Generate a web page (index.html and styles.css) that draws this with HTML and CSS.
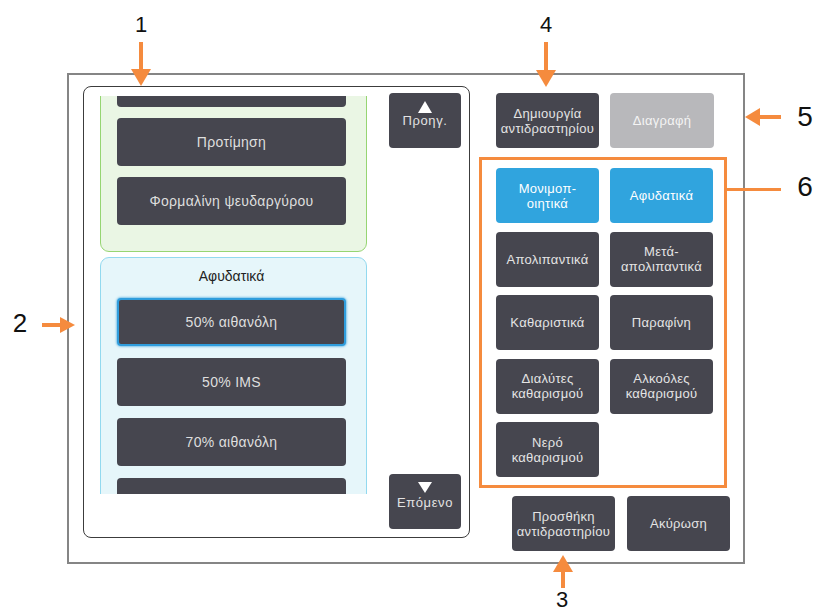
FILE: index.html
```html
<!DOCTYPE html>
<html lang="el">
<head>
  <meta charset="UTF-8" />
  <meta name="viewport" content="width=device-width, initial-scale=1.0" />
  <title>Αντιδραστήρια</title>
  <link rel="stylesheet" href="styles.css">
</head>
<body>
  <div class="stage">
    <div class="frame">
      <div class="list-panel">
        <div class="viewport">
          <div class="group green">
            <div class="item-btn"></div>
            <div class="item-btn">Προτίμηση</div>
            <div class="item-btn">Φορμαλίνη ψευδαργύρου</div>
          </div>
          <div class="group blue">
            <div class="group-title">Αφυδατικά</div>
            <div class="item-btn selected">50% αιθανόλη</div>
            <div class="item-btn">50% IMS</div>
            <div class="item-btn">70% αιθανόλη</div>
            <div class="item-btn"></div>
          </div>
        </div>
        <div class="nav">
          <div class="nav-btn"><span class="tri up"></span>Προηγ.</div>
          <div class="nav-btn"><span class="tri down"></span>Επόμενο</div>
        </div>
      </div>

      <div class="side">
        <div class="top-row">
          <div class="btn">Δημιουργία<br>αντιδραστηρίου</div>
          <div class="btn disabled wide">Διαγραφή</div>
        </div>
        <div class="cat-box">
          <div class="btn active">Μονιμοπ-<br>οιητικά</div>
          <div class="btn active">Αφυδατικά</div>
          <div class="btn">Απολιπαντικά</div>
          <div class="btn">Μετά-<br>απολιπαντικά</div>
          <div class="btn">Καθαριστικά</div>
          <div class="btn">Παραφίνη</div>
          <div class="btn">Διαλύτες<br>καθαρισμού</div>
          <div class="btn">Αλκοόλες<br>καθαρισμού</div>
          <div class="btn">Νερό<br>καθαρισμού</div>
        </div>
        <div class="bottom-row">
          <div class="btn">Προσθήκη<br>αντιδραστηρίου</div>
          <div class="btn">Ακύρωση</div>
        </div>
      </div>
    </div>

    <!-- callouts -->
    <svg class="callouts" width="814" height="613" viewBox="0 0 814 613">
      <g fill="#f58b3e">
        <rect x="139" y="42" width="4" height="29" />
        <polygon points="131,69 151,69 141,86" />
        <rect x="544" y="42" width="4" height="30" />
        <polygon points="536,70 556,70 546,87" />
        <rect x="42" y="323" width="20" height="4" />
        <polygon points="60,317 60,333 75,325" />
        <rect x="758" y="115" width="23" height="4" />
        <polygon points="760,108 760,126 745,117" />
        <rect x="727" y="188" width="54" height="3" />
        <rect x="561" y="570" width="4" height="18" />
        <polygon points="553,572 573,572 563,555" />
      </g>
    </svg>
    <span class="num n1">1</span>
    <span class="num n4">4</span>
    <span class="num n2">2</span>
    <span class="num n5">5</span>
    <span class="num n6">6</span>
    <span class="num n3">3</span>
  </div>
</body>
</html>
```

FILE: styles.css
```css
body {
  margin: 0;
  background: #fff;
  font-family: "Liberation Sans", Arial, sans-serif;
}
.stage {
  position: relative;
  width: 814px;
  height: 613px;
  overflow: hidden;
}
.frame {
  margin: 73px 0 0 67px;
  width: 678px;
  height: 491px;
  box-sizing: border-box;
  border: 2px solid #858585;
  padding: 11px 0 0 14px;
  display: flex;
  align-items: flex-start;
}

/* left list */
.list-panel {
  width: 387px;
  height: 452px;
  box-sizing: border-box;
  border: 1px solid #3c3c3c;
  border-radius: 8px;
  display: flex;
}
.viewport {
  margin: 9px 0 0 16px;
  width: 267px;
  height: 398px;
  overflow: hidden;
}
.group {
  box-sizing: border-box;
  width: 267px;
  border: 1px solid;
  border-radius: 9px;
  display: flex;
  flex-direction: column;
}
.group.green {
  margin-top: -50px;
  padding: 12px 20px 26px 16px;
  gap: 11px;
  background: #eaf6e4;
  border-color: #96d572;
}
.group.blue {
  margin-top: 5px;
  padding: 8px 20px 20px 16px;
  gap: 12px;
  background: #e6f6fa;
  border-color: #92d9ef;
}
.group-title {
  height: 20px;
  line-height: 20px;
  text-align: center;
  font-size: 14px;
  color: #222;
}
.item-btn {
  flex: none;
  width: 229px;
  height: 48px;
  box-sizing: border-box;
  background: #46464f;
  border-radius: 4px;
  color: #dedede;
  font-size: 14px;
  letter-spacing: 0.3px;
  display: flex;
  align-items: center;
  justify-content: center;
}
.item-btn.selected {
  border: 2px solid #2f9ddc;
  box-shadow: 0 0 2px 1px rgba(47, 157, 220, 0.55);
}
.nav {
  margin-left: 22px;
  height: 442px;
  padding-top: 6px;
  box-sizing: border-box;
  display: flex;
  flex-direction: column;
  justify-content: space-between;
}
.nav-btn {
  width: 72px;
  height: 55px;
  box-sizing: border-box;
  padding-top: 8px;
  background: #46464f;
  border-radius: 4px;
  color: #e2e2e2;
  font-size: 13px;
  letter-spacing: 0.6px;
  line-height: 15px;
  display: flex;
  flex-direction: column;
  align-items: center;
}
.tri {
  width: 0;
  height: 0;
  border-left: 7px solid transparent;
  border-right: 7px solid transparent;
}
.tri.up {
  border-bottom: 12px solid #fff;
}
.tri.down {
  border-top: 11px solid #fff;
  margin-bottom: 2px;
}

/* right side */
.side {
  margin: 7px 0 0 9px;
}
.top-row {
  display: flex;
  gap: 11px;
  padding-left: 17px;
}
.btn {
  width: 103px;
  height: 55px;
  box-sizing: border-box;
  background: #46464f;
  border-radius: 4px;
  color: #e4e4e4;
  font-size: 13px;
  line-height: 15px;
  letter-spacing: 0.3px;
  text-align: center;
  display: flex;
  align-items: center;
  justify-content: center;
}
.btn.wide {
  width: 104px;
}
.btn.disabled {
  background: #b8b8bb;
  color: #f4f4f4;
}
.btn.active {
  background: #30a4de;
  color: #fff;
}
.cat-box {
  margin-top: 9px;
  width: 248px;
  box-sizing: border-box;
  border: 3px solid #f58b3e;
  padding: 8px 11px 8px 14px;
  display: grid;
  grid-template-columns: 103px 103px;
  column-gap: 11px;
  row-gap: 8.5px;
}
.bottom-row {
  margin-top: 8px;
  padding-left: 33px;
  display: flex;
  gap: 12px;
}

/* callouts */
.callouts {
  position: absolute;
  left: 0;
  top: 0;
  pointer-events: none;
}
.num {
  position: absolute;
  width: 20px;
  text-align: center;
  line-height: 1;
  color: #111;
}
.n1 { left: 131px; top: 14px; font-size: 22px; }
.n4 { left: 536px; top: 14px; font-size: 22px; }
.n2 { left: 10px; top: 310px; font-size: 26px; }
.n5 { left: 795px; top: 103px; font-size: 28px; }
.n6 { left: 795px; top: 173px; font-size: 28px; }
.n3 { left: 552px; top: 590px; font-size: 22px; line-height: 20px; }
```
